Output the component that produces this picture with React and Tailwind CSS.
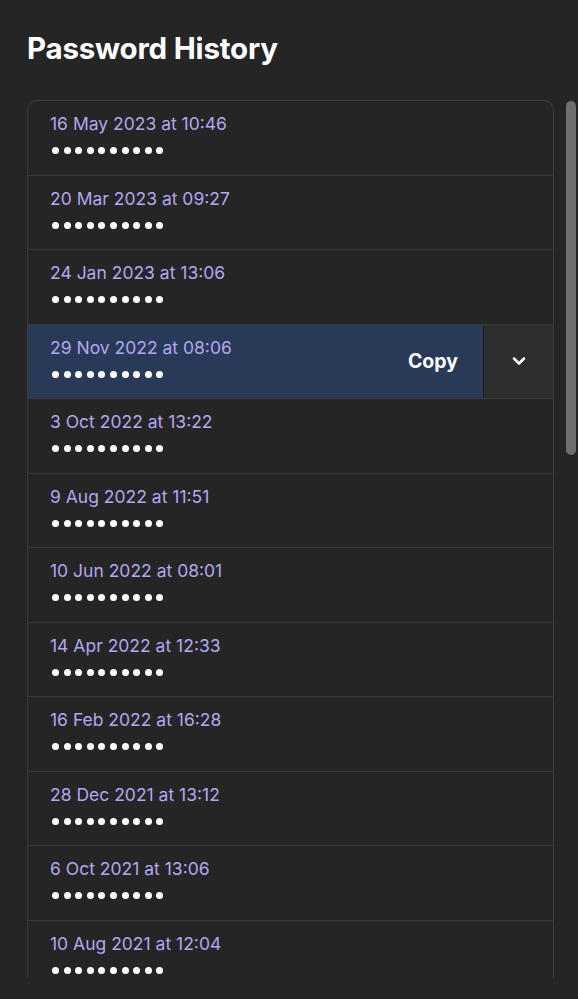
import { ChevronDown } from "lucide-react";

const history = [
  "16 May 2023 at 10:46",
  "20 Mar 2023 at 09:27",
  "24 Jan 2023 at 13:06",
  "29 Nov 2022 at 08:06",
  "3 Oct 2022 at 13:22",
  "9 Aug 2022 at 11:51",
  "10 Jun 2022 at 08:01",
  "14 Apr 2022 at 12:33",
  "16 Feb 2022 at 16:28",
  "28 Dec 2021 at 13:12",
  "6 Oct 2021 at 13:06",
  "10 Aug 2021 at 12:04",
];

function Dots() {
  return (
    <div className="flex gap-[4.6px] mt-[12px] ml-[2px]">
      {Array.from({ length: 10 }).map((_, i) => (
        <span key={i} className="block w-[7px] h-[7px] rounded-full bg-white" />
      ))}
    </div>
  );
}

function Row({ date, active }) {
  return (
    <div
      className={
        "flex h-[74.5px] border-b border-[#3a3a3a] " +
        (active ? "bg-[#283a58]" : "")
      }
    >
      <div className="flex-1 pl-[22px] pt-[12px]">
        <div className="text-[17.5px] leading-[22px] text-[#b3a7ef]">{date}</div>
        <Dots />
      </div>
      {active && (
        <>
          <div className="flex items-center pr-[25px] text-white font-bold text-[19.5px]">
            Copy
          </div>
          <div className="w-[70px] flex items-center justify-center bg-[#2e2e2e] border-l border-[#1e1e1e]">
            <ChevronDown size={20} strokeWidth={3} color="#ffffff" />
          </div>
        </>
      )}
    </div>
  );
}

export default function App() {
  return (
    <div
      className="w-[578px] h-[999px] overflow-hidden bg-[#252525] flex flex-col"
      style={{ fontFamily: "Inter, 'Noto Sans', sans-serif" }}
    >
      <h1 className="pl-[27px] pt-[30px] text-[29.5px] leading-[36px] font-bold text-white tracking-[-0.2px]">
        Password History
      </h1>
      <div className="flex mt-[34px] h-[878px]">
        <div className="ml-[27px] w-[527px] h-full overflow-hidden border-x border-t border-[#3d3d3d] rounded-t-[10px]">
          {history.map((d, i) => (
            <Row key={d} date={d} active={i === 3} />
          ))}
        </div>
        <div className="ml-[12px] pt-[1px]">
          <div className="w-[10px] h-[354px] rounded-full bg-[#6f6f6f]" />
        </div>
      </div>
    </div>
  );
}
